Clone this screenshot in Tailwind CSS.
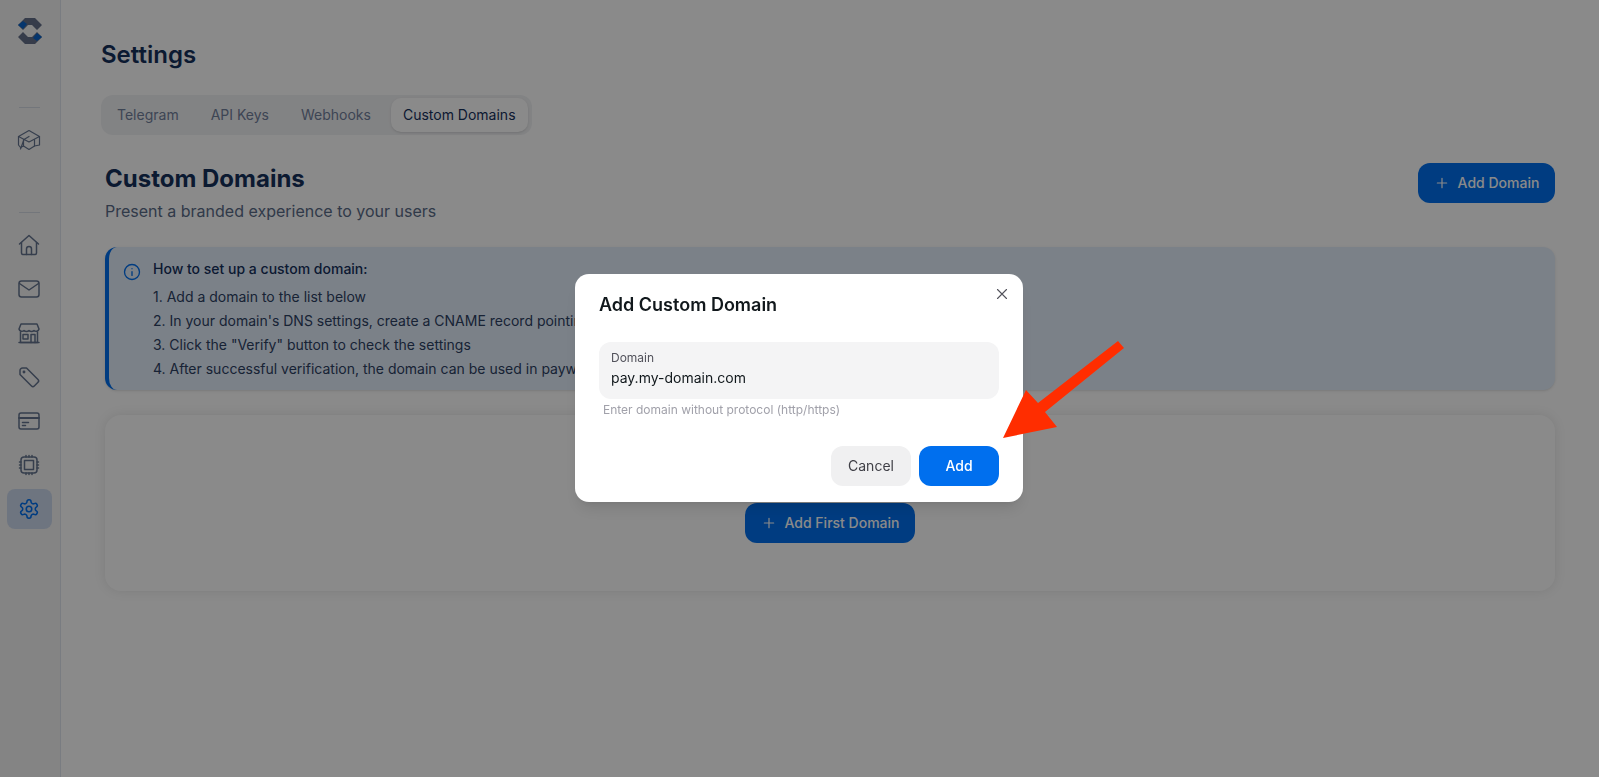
<!DOCTYPE html>
<html lang="en">
<head>
    <meta charset="UTF-8">
    <title>Settings - Custom Domains</title>
    <script src="https://cdn.jsdelivr.net/npm/@tailwindcss/browser@4"></script>
</head>
<body class="h-[777px] overflow-hidden bg-white font-['Inter','Liberation_Sans',sans-serif] text-[#16305c]">

    <div class="flex h-[777px]">
        <!-- Sidebar -->
        <aside class="w-[61px] shrink-0 border-r border-[#dfe5ee] bg-[#f4f4f4] pr-[2px] flex flex-col items-center text-[#64748f]">
            <svg class="mt-[17px] ml-[2px]" width="26" height="28" viewBox="0 0 26 28">
                <path d="M1 8 8 1h10l7 7-5 5-5-5H11l-5 5z" fill="#64708a"/>
                <path d="M25 20l-7 7H8l-7-7 5-5 5 5h4l5-5z" fill="#64708a"/>
                <path d="M1 8l5-4 4 3-4 5z" fill="#0a63c9"/>
                <path d="M25 20l-5 4-4-3 4-5z" fill="#0a63c9"/>
            </svg>
            <div class="w-[21px] h-px bg-[#d5dae3] mt-[62px]"></div>
            <div class="h-10 w-[45px] flex items-center justify-center mt-[12px]">
                <svg width="24" height="24" viewBox="0 0 24 24" fill="none" stroke="currentColor" stroke-width="1.200" stroke-linejoin="round" stroke-linecap="round">
                    <path d="M1.500 8.500 12 2.500l10.500 6L12 14z"/>
                    <path d="M6.500 11.500V18l5.500 3.500 5.500-3.500v-6.500"/>
                    <path d="M1.500 8.500v8.500l2 2.500 3-1.500"/>
                    <path d="M22.500 8.500V17l-5 1"/>
                    <path d="M3.500 21 7 11.500l5-3"/>
                </svg>
            </div>
            <div class="w-[21px] h-px bg-[#d5dae3] mt-[52px]"></div>
            <nav class="flex flex-col items-center gap-1 mt-[12px]">
                <div class="h-10 w-[45px] flex items-center justify-center">
                    <svg width="24" height="24" viewBox="0 0 24 24" fill="none" stroke="currentColor" stroke-width="1.500" stroke-linejoin="round" stroke-linecap="round">
                        <path d="M2.500 11 12 2.500l9.500 8.500"/>
                        <path d="M4.500 9.500V20a1.500 1.500 0 0 0 1.500 1.500h12a1.500 1.500 0 0 0 1.500-1.500V9.500"/>
                        <path d="M9.500 21.500V16a2.500 2.500 0 0 1 5 0v5.500"/>
                    </svg>
                </div>
                <div class="h-10 w-[45px] flex items-center justify-center">
                    <svg width="24" height="24" viewBox="0 0 24 24" fill="none" stroke="currentColor" stroke-width="1.500" stroke-linejoin="round" stroke-linecap="round">
                        <rect x="2" y="4" width="20" height="16" rx="2.500"/>
                        <path d="m2.500 6.500 9.500 6.500 9.500-6.500"/>
                    </svg>
                </div>
                <div class="h-10 w-[45px] flex items-center justify-center">
                    <svg width="24" height="24" viewBox="0 0 24 24" fill="none" stroke="currentColor" stroke-width="1.500" stroke-linejoin="round" stroke-linecap="round">
                        <path d="M4 3h16l2 5a3 3 0 0 1-5 1.500 3.500 3.500 0 0 1-5 0 3.500 3.500 0 0 1-5 0A3 3 0 0 1 2 8z"/>
                        <path d="M3.500 11v10.500h17V11"/>
                        <rect x="6" y="13.500" width="5" height="4.500"/>
                        <path d="M14 21.500V13.500h4v8"/>
                        <path d="M2 21.500h20"/>
                    </svg>
                </div>
                <div class="h-10 w-[45px] flex items-center justify-center">
                    <svg width="24" height="24" viewBox="0 0 24 24" fill="none" stroke="currentColor" stroke-width="1.500" stroke-linejoin="round" stroke-linecap="round">
                        <path d="M3 5.500A2.500 2.500 0 0 1 5.500 3h4l11.500 11.500a2 2 0 0 1 0 2.800l-3.700 3.700a2 2 0 0 1-2.800 0L3 9.500z"/>
                        <circle cx="7" cy="7" r="0.700"/>
                    </svg>
                </div>
                <div class="h-10 w-[45px] flex items-center justify-center">
                    <svg width="24" height="24" viewBox="0 0 24 24" fill="none" stroke="currentColor" stroke-width="1.500" stroke-linejoin="round" stroke-linecap="round">
                        <rect x="2" y="4" width="20" height="16" rx="2"/>
                        <path d="M2 9h20" stroke-width="2"/>
                        <path d="M5.500 13.500h6M5.500 16.500h3"/>
                    </svg>
                </div>
                <div class="h-10 w-[45px] flex items-center justify-center">
                    <svg width="24" height="24" viewBox="0 0 24 24" fill="none" stroke="currentColor" stroke-width="1.500" stroke-linejoin="round" stroke-linecap="round">
                        <rect x="4" y="4" width="16" height="16" rx="3"/>
                        <rect x="7.500" y="7.500" width="9" height="9"/>
                        <path d="M2.500 9h1.500M2.500 12h1.500M2.500 15h1.500M20 9h1.500M20 12h1.500M20 15h1.500M9 2.500V4M12 2.500V4M15 2.500V4M9 20v1.500M12 20v1.500M15 20v1.500"/>
                    </svg>
                </div>
                <div class="h-10 w-[45px] flex items-center justify-center rounded-lg bg-[#ccd8ec] text-[#006fee]">
                    <svg width="22" height="22" viewBox="0 0 24 24" fill="none" stroke="currentColor" stroke-width="1.700" stroke-linejoin="round" stroke-linecap="round">
                        <path d="M12.220 2h-.44a2 2 0 0 0-2 2v.18a2 2 0 0 1-1 1.730l-.43.250a2 2 0 0 1-2 0l-.15-.080a2 2 0 0 0-2.730.730l-.22.380a2 2 0 0 0 .730 2.730l.15.100a2 2 0 0 1 1 1.720v.510a2 2 0 0 1-1 1.740l-.15.090a2 2 0 0 0-.730 2.730l.22.380a2 2 0 0 0 2.730.730l.15-.080a2 2 0 0 1 2 0l.43.250a2 2 0 0 1 1 1.730V20a2 2 0 0 0 2 2h.44a2 2 0 0 0 2-2v-.18a2 2 0 0 1 1-1.730l.43-.250a2 2 0 0 1 2 0l.15.080a2 2 0 0 0 2.730-.730l.22-.390a2 2 0 0 0-.730-2.730l-.15-.080a2 2 0 0 1-1-1.740v-.500a2 2 0 0 1 1-1.740l.15-.090a2 2 0 0 0 .730-2.730l-.22-.380a2 2 0 0 0-2.730-.730l-.15.080a2 2 0 0 1-2 0l-.43-.250a2 2 0 0 1-1-1.730V4a2 2 0 0 0-2-2z"/>
                        <circle cx="12" cy="12" r="3"/>
                    </svg>
                </div>
            </nav>
        </aside>

        <!-- Main content -->
        <main class="flex-1 min-w-0 pl-10 pr-10 pt-[39px]">
            <h1 class="text-2xl font-semibold leading-8">Settings</h1>

            <div class="mt-[24px] inline-flex gap-2 rounded-xl bg-[#f1f2f4] px-1 py-[3px] text-sm text-[#71809c]">
                <div class="h-[34px] px-3 flex items-center">Telegram</div>
                <div class="h-[34px] px-3 flex items-center">API Keys</div>
                <div class="h-[34px] px-3 flex items-center">Webhooks</div>
                <div class="h-[34px] px-3 flex items-center rounded-[10px] bg-white shadow-sm text-[#16305c]">Custom Domains</div>
            </div>

            <div class="px-1">
                <div class="mt-[28px] flex justify-between items-start">
                    <div>
                        <h2 class="text-2xl font-bold leading-8">Custom Domains</h2>
                        <p class="mt-[4px] text-base leading-6 text-[#5a6b88]">Present a branded experience to your users</p>
                    </div>
                    <button class="h-10 w-[137px] flex items-center justify-center gap-2 rounded-xl bg-[#006fee] text-sm font-medium text-white">
                        <svg width="16" height="16" viewBox="0 0 24 24" fill="none" stroke="currentColor" stroke-width="1.800" stroke-linecap="round"><path d="M12 5v14M5 12h14"/></svg>
                        Add Domain
                    </button>
                </div>

                <div class="mt-[24px] rounded-xl border-l-4 border-[#006fee] bg-[#e4effc] pl-[44px] pt-[10px] pb-[9px] relative shadow-sm">
                    <svg class="absolute left-[14px] top-[16px]" width="18" height="18" viewBox="0 0 24 24" fill="none" stroke="#006fee" stroke-width="1.800" stroke-linecap="round"><circle cx="12" cy="12" r="10"/><path d="M12 11.500v5M12 7.500v.01"/></svg>
                    <p class="w-fit text-sm font-medium leading-6">How to set up a custom domain:</p>
                    <!-- lines run under the modal, cut at its left edge -->
                    <ol class="mt-1 w-[422px] overflow-hidden whitespace-nowrap text-sm leading-6 text-[#2d4163]">
                        <li>1. Add a domain to the list below</li>
                        <li>2. In your domain's DNS settings, create a CNAME record pointing to our server</li>
                        <li>3. Click the "Verify" button to check the settings</li>
                        <li>4. After successful verification, the domain can be used in paywalls</li>
                    </ol>
                </div>

                <div class="mt-[25px] rounded-2xl bg-white shadow-[0_0_12px_rgba(0,0,0,0.10)] pt-[88px] pb-[48px] flex justify-center">
                    <button class="h-10 w-[170px] flex items-center justify-center gap-2 rounded-xl bg-[#006fee] text-sm font-medium text-white">
                        <svg width="16" height="16" viewBox="0 0 24 24" fill="none" stroke="currentColor" stroke-width="1.800" stroke-linecap="round"><path d="M12 5v14M5 12h14"/></svg>
                        Add First Domain
                    </button>
                </div>
            </div>
        </main>
    </div>

    <!-- Backdrop -->
    <div class="fixed inset-0 bg-black/[0.46]"></div>

    <!-- Add domain modal -->
    <div class="fixed left-[575px] top-[274px] w-[448px] h-[228px] rounded-[14px] bg-white px-6 shadow-lg">
        <button class="absolute right-[15px] top-[14px] text-[#52525b]">
            <svg class="block" width="12" height="12" viewBox="0 0 12 12" fill="none" stroke="currentColor" stroke-width="1.100" stroke-linecap="round"><path d="M1.500 1.500l9 9M10.500 1.500l-9 9"/></svg>
        </button>
        <h3 class="pt-[19px] text-lg font-semibold leading-6 text-[#11181c]">Add Custom Domain</h3>
        <div class="mt-[25px] h-[57px] rounded-xl bg-[#f4f4f5] px-3 pt-2">
            <label class="block text-xs leading-4 text-[#52525b]">Domain</label>
            <div class="text-sm leading-5 mt-[2px] text-[#11181c]">pay.my-domain.com</div>
        </div>
        <p class="mt-[3px] pl-1 text-xs leading-4 text-[#a1a1aa]">Enter domain without protocol (http/https)</p>
        <div class="mt-[28px] flex justify-end gap-2">
            <button class="h-10 w-20 rounded-xl bg-[#f0f0f1] text-sm text-[#3f3f46]">Cancel</button>
            <button class="h-10 w-20 rounded-xl bg-[#006fee] text-sm font-medium text-white">Add</button>
        </div>
    </div>

    <!-- Red annotation arrow -->
    <svg class="fixed left-0 top-0 pointer-events-none" width="1599" height="777" viewBox="0 0 1599 777">
        <polygon points="1118,341 1124,348 1045,412 1057,427 1003,438 1026,390 1038,403" fill="#ff2d00"/>
    </svg>
</body>
</html>
